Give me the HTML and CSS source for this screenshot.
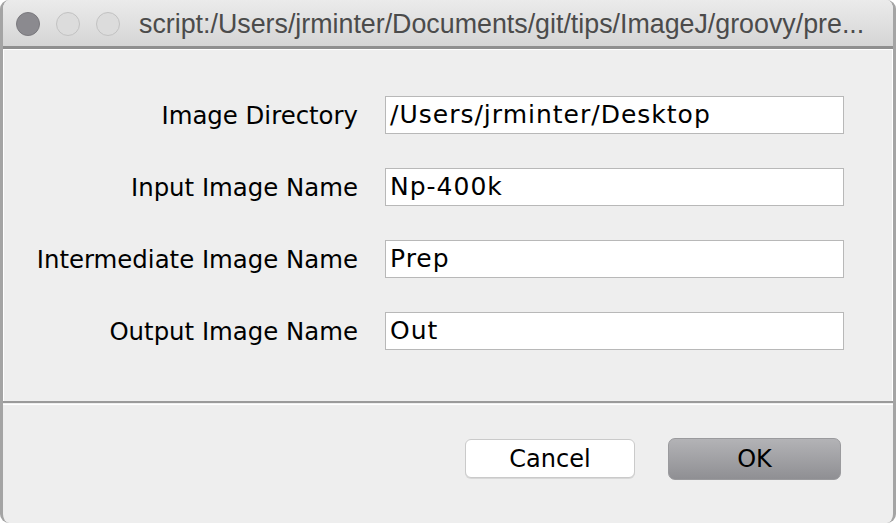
FILE: index.html
```html
<!DOCTYPE html>
<html>
<head>
<meta charset="utf-8">
<link rel="stylesheet" href="styles.css">
</head>
<body>
<div class="window">
  <div class="titlebar">
    <div class="lights">
      <span class="light close"></span>
      <span class="light off"></span>
      <span class="light off"></span>
    </div>
    <div class="title">script:/Users/jrminter/Documents/git/tips/ImageJ/groovy/pre...</div>
  </div>
  <div class="panel">
    <div class="form">
      <label class="label">Image Directory</label>
      <div class="field">/Users/jrminter/Desktop</div>
      <label class="label">Input Image Name</label>
      <div class="field">Np-400k</div>
      <label class="label">Intermediate Image Name</label>
      <div class="field">Prep</div>
      <label class="label">Output Image Name</label>
      <div class="field">Out</div>
    </div>
  </div>
  <div class="buttons">
    <button class="btn cancel">Cancel</button>
    <button class="btn ok">OK</button>
  </div>
</div>
</body>
</html>
```

FILE: styles.css
```css
html, body {
  margin: 0;
  padding: 0;
  background: #ffffff;
}
.window {
  width: 896px;
  height: 523px;
  box-sizing: border-box;
  background: #eeeeee;
  border-left: 3px solid #a4a4a4;
  border-right: 3px solid #a4a4a4;
  border-radius: 9px;
  overflow: hidden;
  display: flex;
  flex-direction: column;
  font-family: "DejaVu Sans", sans-serif;
  color: #000;
}
.titlebar {
  height: 46px;
  flex: none;
  background: linear-gradient(#ebebeb, #d5d5d5);
  border-bottom: 3px solid #8f8f8f;
  display: flex;
  align-items: center;
  margin: 0 -3px;
  padding-left: 16px;
}
.lights {
  display: flex;
  gap: 16px;
  margin-top: 2px;
}
.light {
  width: 24px;
  height: 24px;
  border-radius: 50%;
  box-sizing: border-box;
}
.light.close {
  background: #8b8a8f;
  border: 1px solid #7a797e;
}
.light.off {
  background: #dcdcdc;
  border: 1px solid #c2c2c2;
}
.title {
  margin-left: 19px;
  font-family: "Liberation Sans", Arial, sans-serif;
  font-size: 26.8px;
  color: #4b4b4b;
  white-space: nowrap;
  margin-top: 2px;
}
.panel {
  flex: none;
  height: 352px;
  box-sizing: border-box;
  border: 1px solid #ffffff;
  border-bottom: none;
  box-shadow: 0 2px 0 #9a9a9a;
  padding-top: 46px;
}
.form {
  display: grid;
  grid-template-columns: 354px 459px;
  column-gap: 27px;
  row-gap: 34px;
  align-items: center;
}
.label {
  text-align: right;
  font-size: 24.4px;
  white-space: nowrap;
}
.field {
  height: 38px;
  box-sizing: border-box;
  background: #ffffff;
  border: 1px solid #b8b8b8;
  font-size: 25px;
  letter-spacing: 1px;
  line-height: 36px;
  padding-left: 4px;
  white-space: nowrap;
}
.buttons {
  flex: 1;
  margin-top: 3px;
  border-top: 1px solid #ffffff;
  display: flex;
  justify-content: flex-end;
  align-items: flex-start;
  gap: 33px;
  padding: 33px 52px 0 0;
}
.btn {
  font-family: "DejaVu Sans", sans-serif;
  font-size: 24px;
  color: #000;
  box-sizing: border-box;
  padding: 0;
  margin: 0;
}
.cancel {
  width: 170px;
  height: 39px;
  margin-top: 1px;
  background: #ffffff;
  border: 1px solid #cacaca;
  border-radius: 6px;
  box-shadow: 0 1px 0 #d8d8d8;
}
.ok {
  width: 173px;
  height: 42px;
  background: linear-gradient(#b3b3b6, #8f8f93);
  border: 1px solid #9a9a9d;
  border-radius: 7px;
}
```
